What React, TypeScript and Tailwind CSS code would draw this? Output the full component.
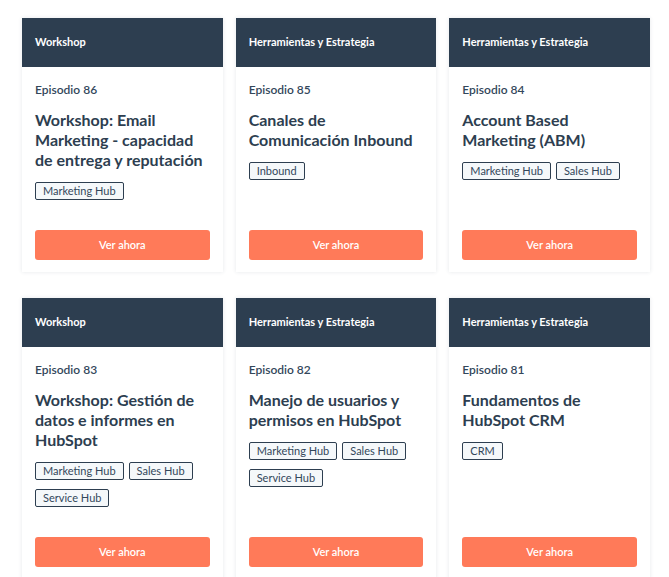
import React from 'react';

interface Episode {
    id: number;
    category: string;
    title: string;
    tags: string[];
}

const episodes: Episode[] = [
    { id: 86, category: 'Workshop', title: 'Workshop: Email Marketing - capacidad de entrega y reputación', tags: ['Marketing Hub'] },
    { id: 85, category: 'Herramientas y Estrategia', title: 'Canales de Comunicación Inbound', tags: ['Inbound'] },
    { id: 84, category: 'Herramientas y Estrategia', title: 'Account Based Marketing (ABM)', tags: ['Marketing Hub', 'Sales Hub'] },
    { id: 83, category: 'Workshop', title: 'Workshop: Gestión de datos e informes en HubSpot', tags: ['Marketing Hub', 'Sales Hub', 'Service Hub'] },
    { id: 82, category: 'Herramientas y Estrategia', title: 'Manejo de usuarios y permisos en HubSpot', tags: ['Marketing Hub', 'Sales Hub', 'Service Hub'] },
    { id: 81, category: 'Herramientas y Estrategia', title: 'Fundamentos de HubSpot CRM', tags: ['CRM'] },
];

function EpisodeCard({ ep }: { ep: Episode }) {
    return (
        <div className="flex flex-col bg-white shadow-[0_0_4px_rgba(45,62,80,0.12)]">
            <div className="h-[49px] flex items-center px-[13px] bg-[#2d3e50]">
                <span className="text-[11px] font-bold text-white">{ep.category}</span>
            </div>
            <div className="flex flex-col flex-1 px-[13px] pt-[15px] pb-[12px]">
                <p className="text-[12px] leading-[16px] font-semibold text-[#33475b]">Episodio {ep.id}</p>
                <h3 className="mt-[12px] text-[16px] leading-[20px] font-bold text-[#2d3e50]">{ep.title}</h3>
                <div className="mt-[12px] mb-[30px] flex flex-wrap gap-x-[5px] gap-y-[9px]">
                    {ep.tags.map((tag) => (
                        <span
                            key={tag}
                            className="h-[18px] px-[7px] flex items-center text-[11px] text-[#33475b] bg-[#f5f8fa] border border-[#2d3e50] rounded-[2px]"
                        >
                            {tag}
                        </span>
                    ))}
                </div>
                <button className="mt-auto h-[30px] w-full bg-[#ff7a59] rounded-[3px] text-white text-[11px] font-semibold">
                    Ver ahora
                </button>
            </div>
        </div>
    );
}

export default function App() {
    return (
        <div className="min-h-screen bg-white pl-[22px] pr-[19px] pt-[18px]" style={{ fontFamily: 'Lato, "Noto Sans", sans-serif' }}>
            <div className="grid grid-cols-3 gap-x-[13px] gap-y-[26px]">
                {episodes.map((ep) => (
                    <EpisodeCard key={ep.id} ep={ep} />
                ))}
            </div>
        </div>
    );
}
